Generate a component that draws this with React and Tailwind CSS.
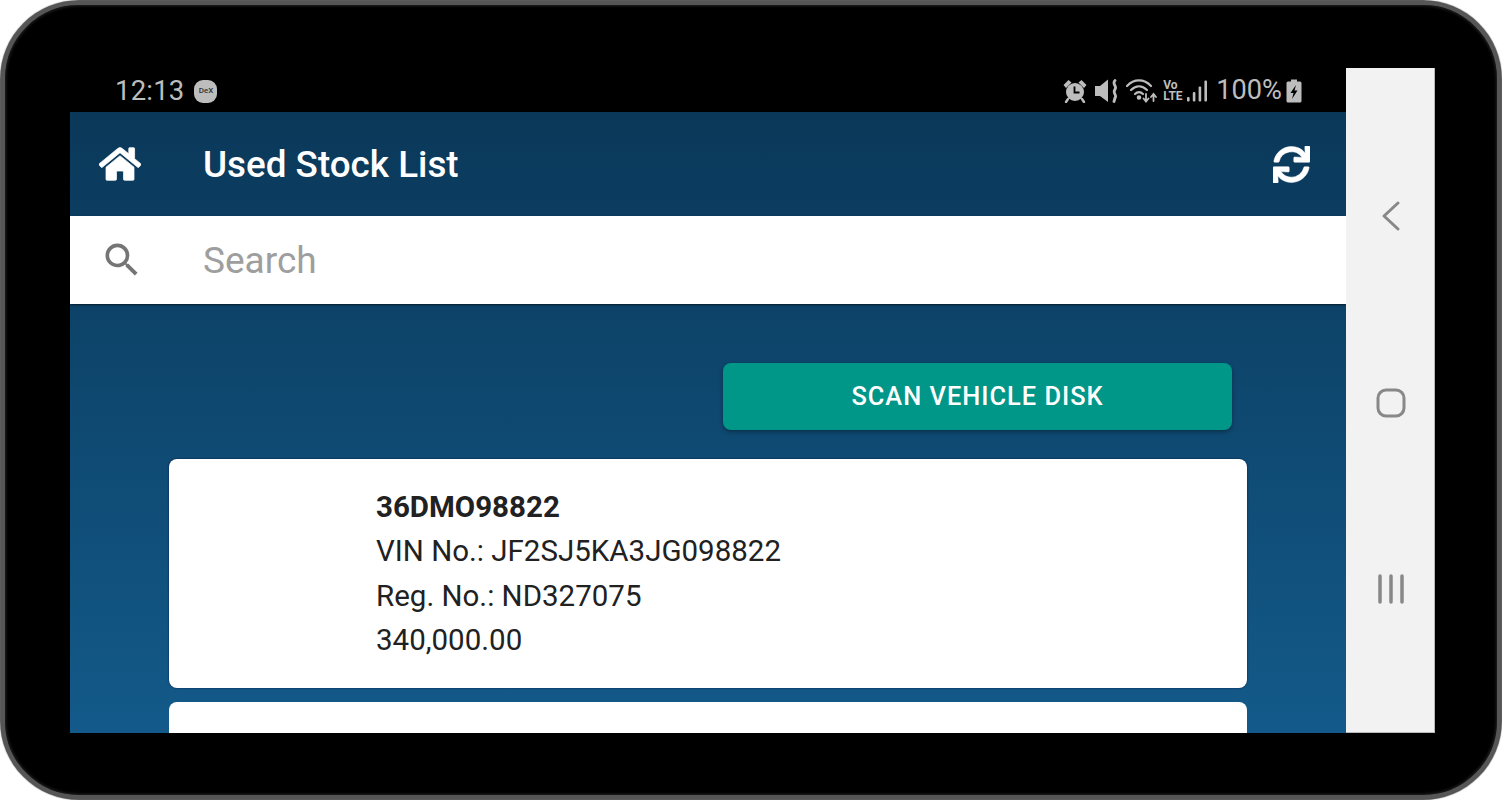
import { FaHome, FaSync } from "react-icons/fa";
import { MdSearch } from "react-icons/md";

function AlarmIcon() {
  return (
    <svg width="24" height="24" viewBox="0 0 24 24" fill="#bdbdbd">
      <circle cx="12" cy="13" r="9" />
      <path d="M0.5 6 L5.5 1 L8.5 3.5 L3 9 Z M23.5 6 L18.5 1 L15.5 3.5 L21 9 Z" />
      <path d="M5 20 L3 23 M19 20 L21 23" stroke="#bdbdbd" strokeWidth="2.4" strokeLinecap="round" />
      <path d="M11.5 7.5 V13.5 H16.5" stroke="#000" strokeWidth="1.8" fill="none" />
    </svg>
  );
}

function MuteIcon() {
  return (
    <svg width="23" height="24" viewBox="0 0 23 24" fill="#bdbdbd">
      <path d="M0 7 H5 L13 0.5 V23 L5 17 H0 Z" />
      <path d="M20 1.5 C16.5 5 22.5 7 20 10.5 C17 14 22.5 16 20 19 L19 22.5" stroke="#bdbdbd" strokeWidth="2.8" fill="none" strokeLinecap="round" />
    </svg>
  );
}

function WifiIcon() {
  return (
    <svg width="31" height="24" viewBox="0 0 31 24" fill="none" stroke="#bdbdbd" strokeWidth="2.2" strokeLinecap="round">
      <path d="M1 7 C8 -0.5 18 -0.5 25 7" />
      <path d="M5 11 C10 6 16 6 21 11" />
      <path d="M9 15 C11.5 12.5 14.5 12.5 17 15" />
      <circle cx="13" cy="18.5" r="1.2" fill="#bdbdbd" />
      <path d="M20 15 V22 M17.5 19.5 L20 22.5 L22.5 19.5" strokeWidth="1.8" />
      <path d="M27.5 22 V15.5 M25 18 L27.5 15 L30 18" strokeWidth="1.8" />
    </svg>
  );
}

function SignalIcon() {
  return (
    <svg width="20" height="24" viewBox="0 0 20 24" fill="#bdbdbd">
      <rect x="0" y="18" width="2.6" height="4.5" rx="1" />
      <rect x="5.8" y="13" width="2.6" height="9.5" rx="1" />
      <rect x="11.6" y="7.5" width="2.6" height="15" rx="1" />
      <rect x="17.4" y="1.5" width="2.6" height="21" rx="1" />
    </svg>
  );
}

function BatteryIcon() {
  return (
    <svg width="16" height="24" viewBox="0 0 16 24" fill="#bdbdbd">
      <path d="M5 0.5 H11 V2.5 H14 Q15.5 2.5 15.5 4 V22 Q15.5 23.5 14 23.5 H2 Q0.5 23.5 0.5 22 V4 Q0.5 2.5 2 2.5 H5 Z" />
      <path d="M10 6 L4.5 14 H7.5 L6 20 L11.5 11.5 H8.5 Z" fill="#000" />
    </svg>
  );
}

function StatusBar() {
  return (
    <div className="h-[44px] shrink-0 bg-black flex items-center justify-between pl-[45px] pr-[44px] pt-[2px] text-[#bdbdbd]">
      <div className="flex items-center gap-[10px]">
        <span className="text-[27.5px] leading-none tracking-[0.2px]">12:13</span>
        <span className="w-[23px] h-[23px] rounded-[9px] bg-[#bdbdbd] text-[#333] text-[8px] font-medium flex items-center justify-center">
          DeX
        </span>
      </div>
      <div className="flex items-center">
        <AlarmIcon />
        <span className="ml-[8px]"><MuteIcon /></span>
        <span className="ml-[8px]"><WifiIcon /></span>
        <span className="ml-[6px] w-[19px] text-[12px] leading-[11px] font-bold">Vo<br />LTE</span>
        <span className="ml-[5px]"><SignalIcon /></span>
        <span className="ml-[9px] text-[27.2px] leading-none">100%</span>
        <span className="ml-[4px]"><BatteryIcon /></span>
      </div>
    </div>
  );
}

function StockCard() {
  return (
    <div className="bg-white rounded-[8px] h-[229px] mx-[99px] w-[1078px] pl-[207px] pt-[26px] text-[29.5px] leading-[44.4px] text-[#212121] shadow-[0_0_2px_rgba(0,0,50,0.8)]">
      <div className="font-bold">36DMO98822</div>
      <div>VIN No.: JF2SJ5KA3JG098822</div>
      <div>Reg. No.: ND327075</div>
      <div>340,000.00</div>
    </div>
  );
}

function AppScreen() {
  return (
    <div className="flex-1 min-h-0 flex flex-col bg-gradient-to-b from-[#0a3859] to-[#135a8a] overflow-hidden">
      <header className="h-[104px] shrink-0 flex items-center pl-[29px] pr-[36px]">
        <FaHome className="text-white w-[42px] h-[38px]" stroke="white" strokeWidth={10} />
        <h1 className="ml-[62px] flex-1 text-white text-[36.8px] font-medium translate-y-px">Used Stock List</h1>
        <FaSync className="text-white w-[37px] h-[37px]" stroke="white" strokeWidth={8} />
      </header>
      <div className="h-[88px] shrink-0 bg-white flex items-center pl-[30px] shadow-[0_1px_2px_rgba(0,0,0,0.6)]">
        <MdSearch className="text-[#757575] w-[44px] h-[44px]" />
        <span className="ml-[59px] text-[37px] text-[#9e9e9e] translate-y-px">Search</span>
      </div>
      <div className="flex-1 min-h-0 pt-[59px] flex flex-col">
        <div className="flex justify-end pr-[114px]">
          <button className="w-[509px] h-[67px] rounded-[8px] bg-[#009688] text-white text-[25.4px] font-medium tracking-[1px] shadow-[0_2px_4px_rgba(0,0,0,0.35)]">
            SCAN VEHICLE DISK
          </button>
        </div>
        <div className="mt-[29px] flex flex-col gap-[14px]">
          <StockCard />
          <div className="bg-white rounded-t-[8px] h-[60px] mx-[99px] w-[1078px]" />
        </div>
      </div>
    </div>
  );
}

function NavBar() {
  return (
    <div className="w-[89px] shrink-0 bg-[#f2f2f2] border-r border-b border-[#b8b8b8] flex flex-col items-center text-[#888888] pt-[132px] pl-[2px]">
      <svg width="20" height="32" viewBox="0 0 20 32" fill="none" stroke="currentColor" strokeWidth="3" strokeLinecap="round" strokeLinejoin="round">
        <path d="M17 3 L3 16 L17 29" />
      </svg>
      <svg className="mt-[155px]" width="32" height="32" viewBox="0 0 32 32" fill="none" stroke="currentColor" strokeWidth="3">
        <rect x="3" y="3" width="26" height="26" rx="8" />
      </svg>
      <svg className="mt-[155px]" width="30" height="30" viewBox="0 0 30 30" fill="none" stroke="currentColor" strokeWidth="3.5" strokeLinecap="round">
        <path d="M4 2 V28 M15 2 V28 M26 2 V28" />
      </svg>
    </div>
  );
}

export default function App() {
  return (
    <div className="w-[1502px] h-[800px] bg-white overflow-hidden font-['Roboto',sans-serif]">
      <div className="w-[1500px] h-[798px] ml-px mt-px rounded-[78px] bg-black border-[4px] border-[#565656] shadow-[0_0_1px_1px_rgba(30,30,30,0.8),inset_0_0_3px_1px_#222] pt-[63px] pb-[62px] pl-[65px] pr-[62px] box-border">
        <div className="flex h-full">
          <div className="flex-1 min-w-0 flex flex-col">
            <StatusBar />
            <AppScreen />
          </div>
          <NavBar />
        </div>
      </div>
    </div>
  );
}
